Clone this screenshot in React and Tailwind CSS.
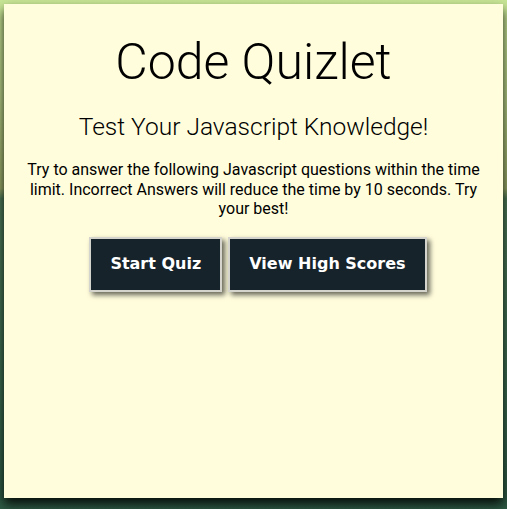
import React from 'react';

export default function App() {
  return (
    <div className="min-h-[509px] w-full bg-[linear-gradient(180deg,#c8e696_0%,#b4cc84_20%,#98a866_37%,#4f7b58_39%,#3e6e52_70%,#2d5a44_100%)] p-[4px] pb-[11px] font-['Roboto',sans-serif]">
      <div className="h-[494px] bg-[#fffddc] shadow-[0_6px_10px_rgba(0,0,0,0.85)] px-5 text-center text-black">
        {/* Title */}
        <h1 className="pt-[28px] text-[50px] font-light leading-[60px]">Code Quizlet</h1>
        <h2 className="mt-[19px] text-[24.5px] font-light leading-[32px]">Test Your Javascript Knowledge!</h2>
        <p className="mt-[17px] text-[16px] leading-[19.5px]">
          Try to answer the following Javascript questions within the time limit. Incorrect Answers will reduce the
          time by 10 seconds. Try your best!
        </p>

        {/* Actions */}
        <div className="mt-[18px] ml-[9px] flex justify-center gap-[6px] font-['DejaVu_Sans',sans-serif]">
          <button className="h-[55px] px-[19px] bg-[#17232b] text-white text-[16px] font-bold border-2 border-[#d4d4cc] shadow-[3px_3px_5px_rgba(0,0,0,0.6)]">
            Start Quiz
          </button>
          <button className="h-[55px] px-[19px] bg-[#17232b] text-white text-[16px] font-bold border-2 border-[#d4d4cc] shadow-[3px_3px_5px_rgba(0,0,0,0.6)]">
            View High Scores
          </button>
        </div>
      </div>
    </div>
  );
}
